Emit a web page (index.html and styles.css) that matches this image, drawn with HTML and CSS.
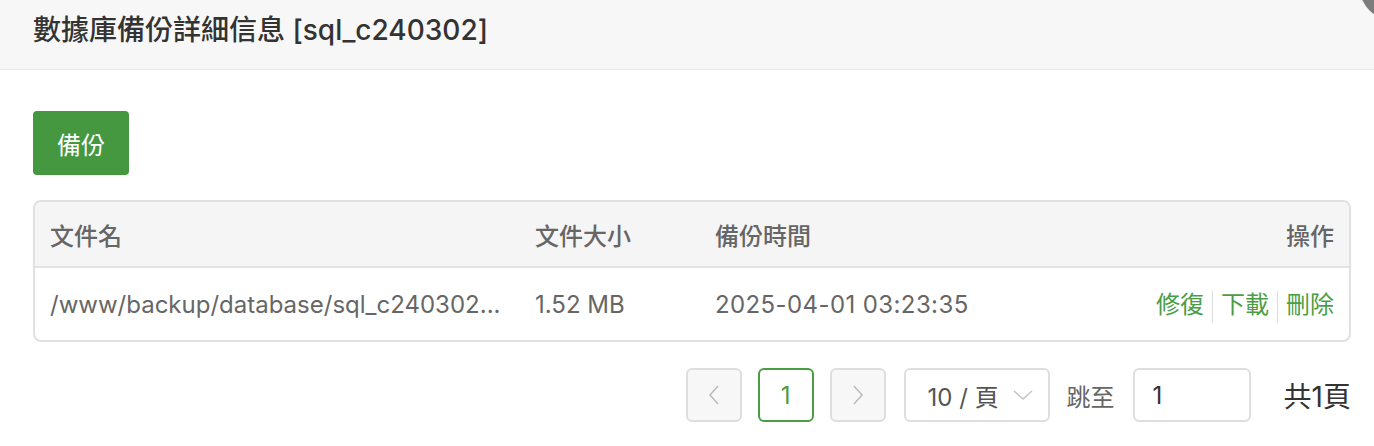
FILE: index.html
```html
<!DOCTYPE html>
<html lang="zh-Hant">
<head>
  <meta charset="UTF-8" />
  <meta name="viewport" content="width=device-width, initial-scale=1.0"/>
  <title>數據庫備份詳細信息</title>
  <link rel="stylesheet" href="styles.css">
</head>
<body>

  <div class="dialog">
    <div class="dialog-head">
      <h3 class="dialog-title">數據庫備份詳細信息 [sql_c240302]</h3>
      <span class="dialog-close"></span>
    </div>

    <div class="dialog-body">
      <button class="btn btn-green">備份</button>

      <div class="table-wrap">
        <table class="table">
          <colgroup>
            <col class="col-name">
            <col class="col-size">
            <col>
            <col class="col-ops">
          </colgroup>
          <thead>
            <tr>
              <th>文件名</th>
              <th>文件大小</th>
              <th>備份時間</th>
              <th class="text-right">操作</th>
            </tr>
          </thead>
          <tbody>
            <tr>
              <td>/www/backup/database/sql_c240302...</td>
              <td>1.52 MB</td>
              <td class="time">2025-04-01 03:23:35</td>
              <td class="text-right">
                <a class="op-link">修復</a><span class="op-sep"></span><a class="op-link">下載</a><span class="op-sep"></span><a class="op-link">刪除</a>
              </td>
            </tr>
          </tbody>
        </table>
      </div>

      <div class="pager">
        <button class="page-btn disabled">
          <svg width="14" height="22" viewBox="0 0 14 22"><polyline points="11,2 3,11 11,20" fill="none" stroke="#bdbdbd" stroke-width="1.6"/></svg>
        </button>
        <button class="page-btn active">1</button>
        <button class="page-btn disabled">
          <svg width="14" height="22" viewBox="0 0 14 22"><polyline points="3,2 11,11 3,20" fill="none" stroke="#bdbdbd" stroke-width="1.6"/></svg>
        </button>
        <div class="page-size">
          <span>10 / 頁</span>
          <svg width="22" height="12" viewBox="0 0 22 12"><polyline points="2,2 11,10 20,2" fill="none" stroke="#c4c4c4" stroke-width="1.5"/></svg>
        </div>
        <span class="jump-label">跳至</span>
        <input class="jump-input" type="text" value="1">
        <span class="page-total">共1頁</span>
      </div>
    </div>
  </div>

</body>
</html>
```

FILE: styles.css
```css
body {
  margin: 0;
  padding: 0;
  background: #fff;
  font-family: Inter, "Noto Sans CJK TC", "Noto Sans", sans-serif;
  font-size: 24px;
  color: #666;
}

.dialog {
  position: relative;
  overflow: hidden;
  height: 446px;
}

.dialog-head {
  height: 69px;
  background: #f7f7f7;
  border-bottom: 1px solid #ececec;
  padding: 0 33px;
}

.dialog-title {
  margin: 0;
  line-height: 60px;
  font-size: 28px;
  font-weight: 500;
  color: #333;
}

.dialog-close {
  position: absolute;
  top: -51px;
  right: -57px;
  width: 72px;
  height: 72px;
  border-radius: 50%;
  background: #7d7d7d;
}

.dialog-body {
  padding: 41px 23px 0 33px;
}

.btn {
  display: block;
  height: 64px;
  padding: 0 24px;
  border: none;
  border-radius: 4px;
  font-family: inherit;
  font-size: 24px;
  cursor: pointer;
}

.btn-green {
  background: #45983f;
  color: #fff;
}

.table-wrap {
  margin-top: 25px;
  border: 2px solid #e0e0e0;
  border-radius: 8px;
  overflow: hidden;
}

.table {
  width: 100%;
  border-collapse: collapse;
  table-layout: fixed;
}

.col-name { width: 485px; }
.col-size { width: 180px; }
.col-ops { width: 260px; }

.table th,
.table td {
  padding: 0 15px;
  text-align: left;
  white-space: nowrap;
  overflow: hidden;
}

.table th {
  height: 64px;
  background: #f5f5f5;
  border-bottom: 2px solid #e3e3e3;
  font-weight: 500;
  color: #666;
}

.table td {
  height: 72px;
  color: #666;
}

.table td.time {
  letter-spacing: 0.4px;
}

.table .text-right {
  text-align: right;
}

.op-link {
  color: #4a9d45;
  cursor: pointer;
}

.op-sep {
  display: inline-block;
  width: 1px;
  height: 32px;
  margin: 0 8px;
  background: #dcdcdc;
  vertical-align: middle;
}

.pager {
  display: flex;
  justify-content: flex-end;
  align-items: center;
  margin-top: 26px;
}

.page-btn {
  display: flex;
  align-items: center;
  justify-content: center;
  width: 56px;
  height: 54px;
  margin-right: 16px;
  padding: 0;
  border: 2px solid #dedede;
  border-radius: 6px;
  background: #fff;
  font-family: inherit;
  font-size: 24px;
  color: #666;
}

.page-btn.disabled {
  background: #f7f7f7;
}

.page-btn.active {
  border-color: #4a9d45;
  color: #4a9d45;
}

.page-size {
  display: flex;
  align-items: center;
  justify-content: space-between;
  box-sizing: border-box;
  width: 146px;
  height: 54px;
  margin-left: 2px;
  padding: 0 14px 0 22px;
  border: 2px solid #dedede;
  border-radius: 6px;
  color: #555;
}

.jump-label {
  margin: 0 18px 0 17px;
  color: #666;
}

.jump-input {
  box-sizing: border-box;
  width: 118px;
  height: 54px;
  padding: 0 18px;
  border: 2px solid #dedede;
  border-radius: 6px;
  font-family: inherit;
  font-size: 24px;
  color: #333;
}

.page-total {
  margin-left: 33px;
  font-size: 28px;
  color: #333;
}
```
